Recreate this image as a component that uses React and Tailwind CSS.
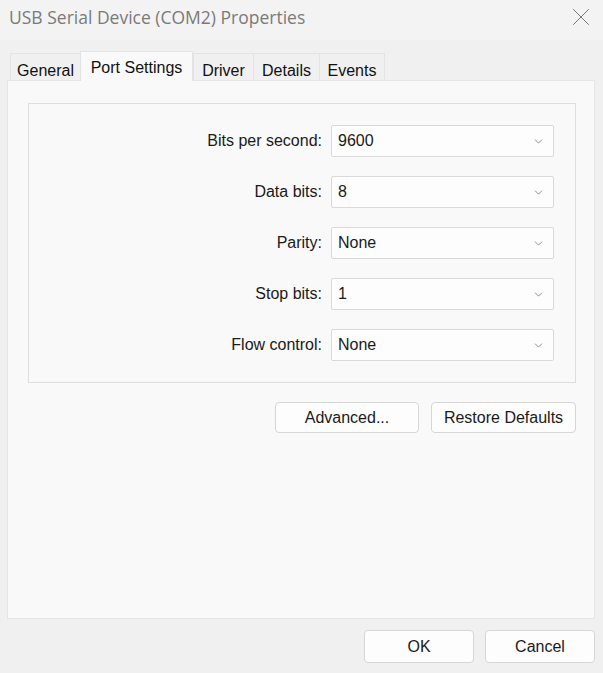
import { X, ChevronDown } from 'lucide-react';

const tabs = [
  { name: 'General', w: 'w-[70px]' },
  { name: 'Port Settings', w: 'w-[113px]', active: true },
  { name: 'Driver', w: 'w-[60px]' },
  { name: 'Details', w: 'w-[66px]' },
  { name: 'Events', w: 'w-[66px]' },
];

const fields = [
  { label: 'Bits per second:', value: '9600' },
  { label: 'Data bits:', value: '8' },
  { label: 'Parity:', value: 'None' },
  { label: 'Stop bits:', value: '1' },
  { label: 'Flow control:', value: 'None' },
];

function Combo({ value }) {
  return (
    <div className="w-[223px] h-[32px] bg-[#fdfdfd] border border-[#d9d9d9] rounded-[2px] flex items-center pl-[6px] pr-[8px]">
      <span className="flex-1 text-[16px] text-[#1a1a1a]">{value}</span>
      <ChevronDown size={13} strokeWidth={1.4} className="text-[#6b6b6b]" />
    </div>
  );
}

function Button({ children, w }) {
  return (
    <button className={`${w} h-full bg-[#fdfdfd] border border-[#d6d6d6] rounded-[4px] text-[16px] text-[#1a1a1a]`}>
      {children}
    </button>
  );
}

export default function App() {
  return (
    <div className="w-[603px] h-[673px] bg-[#f0f0f0] flex flex-col font-['Liberation_Sans',Arial,sans-serif] overflow-hidden">
      {/* Title bar */}
      <div className="h-[40px] bg-[#f3f3f3] flex items-center pl-[9px] pr-[7px]">
        <span className="flex-1 text-[17.5px] text-[#7a7a7a] font-['Open_Sans',sans-serif] pb-[6px]">
          USB Serial Device (COM2) Properties
        </span>
        <X size={30} strokeWidth={0.75} className="text-[#6e6e6e] mb-[6px]" />
      </div>

      {/* Tabs */}
      <div className="h-[40px] flex items-end pl-[10px]">
        {tabs.map(t => (
          <div
            key={t.name}
            className={`${t.w} flex justify-center border-t border-l last:border-r text-[16px] text-[#111] ${
              t.active
                ? 'h-[30px] bg-[#f9f9f9] border-[#e3e3e3] border-r pt-[4px] -mb-px relative z-10'
                : 'h-[27px] bg-[#f0f0f0] border-[#e3e3e3] pt-[5px]'
            }`}
          >
            {t.name}
          </div>
        ))}
      </div>

      {/* Panel */}
      <div className="ml-[7px] w-[588px] h-[539px] bg-[#f9f9f9] border border-[#e5e5e5] pl-[20px] pt-[22px]">
        <div className="w-[548px] h-[280px] border border-[#dedede] pt-[21px] flex flex-col gap-[19px]">
          {fields.map(f => (
            <div key={f.label} className="flex items-center">
              <span className="w-[302px] text-right pr-[9px] text-[16px] text-[#1a1a1a]">{f.label}</span>
              <Combo value={f.value} />
            </div>
          ))}
        </div>
        <div className="h-[31px] mt-[19px] flex justify-end gap-[12px] w-[548px]">
          <Button w="w-[144px]">Advanced...</Button>
          <Button w="w-[145px]">Restore Defaults</Button>
        </div>
      </div>

      {/* Footer */}
      <div className="h-[33px] mt-[11px] flex justify-end gap-[11px] pr-[8px]">
        <Button w="w-[110px]">OK</Button>
        <Button w="w-[110px]">Cancel</Button>
      </div>
    </div>
  );
}
